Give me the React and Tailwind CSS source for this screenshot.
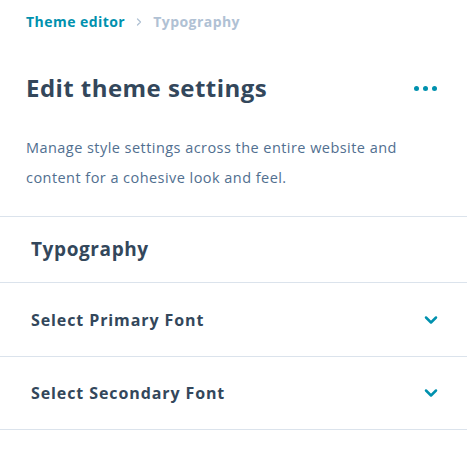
import { ChevronRight, ChevronDown } from 'lucide-react';

const Section = ({ label, h }) => (
    <div className={`flex items-center justify-between border-b border-[#dbe3ec] pl-[31px] pr-[26px] ${h}`}>
        <span className="text-[16px] font-bold text-[#33475b] tracking-[0.9px]">{label}</span>
        <ChevronDown className="w-[20px] h-[20px] text-[#0091ae]" strokeWidth={3} />
    </div>
);

export default function App() {
    return (
        <div className="w-[467px] h-[455px] bg-white font-['Open_Sans',sans-serif] overflow-hidden">
            {/* Breadcrumb */}
            <div className="flex items-center gap-[8px] px-[26px] pt-[11px] text-[14px] font-bold tracking-[0.45px]">
                <span className="text-[#0091ae]">Theme editor</span>
                <ChevronRight className="w-[12px] h-[12px] text-[#b0c1d4]" strokeWidth={2.5} />
                <span className="text-[#b0c1d4]">Typography</span>
            </div>

            {/* Header */}
            <div className="flex items-center justify-between px-[26px] mt-[40px]">
                <h1 className="text-[24px] font-bold text-[#33475b] leading-[32px] tracking-[0.45px]">Edit theme settings</h1>
                <div className="flex gap-[4px] pr-[4px]">
                    <span className="w-[5px] h-[5px] rounded-full bg-[#0091ae]" />
                    <span className="w-[5px] h-[5px] rounded-full bg-[#0091ae]" />
                    <span className="w-[5px] h-[5px] rounded-full bg-[#0091ae]" />
                </div>
            </div>

            <p className="px-[26px] mt-[29px] max-w-[445px] text-[14.5px] leading-[30px] text-[#516f90] tracking-[0.45px]">
                Manage style settings across the entire website and content for a cohesive look and feel.
            </p>

            <div className="mt-[23px] border-t border-[#dbe3ec]">
                <div className="flex items-center border-b border-[#dbe3ec] pl-[31px] h-[66px]">
                    <h2 className="text-[19px] font-bold text-[#33475b] tracking-[0.6px]">Typography</h2>
                </div>
                <Section label="Select Primary Font" h="h-[74px]" />
                <Section label="Select Secondary Font" h="h-[73px]" />
            </div>
        </div>
    );
}
